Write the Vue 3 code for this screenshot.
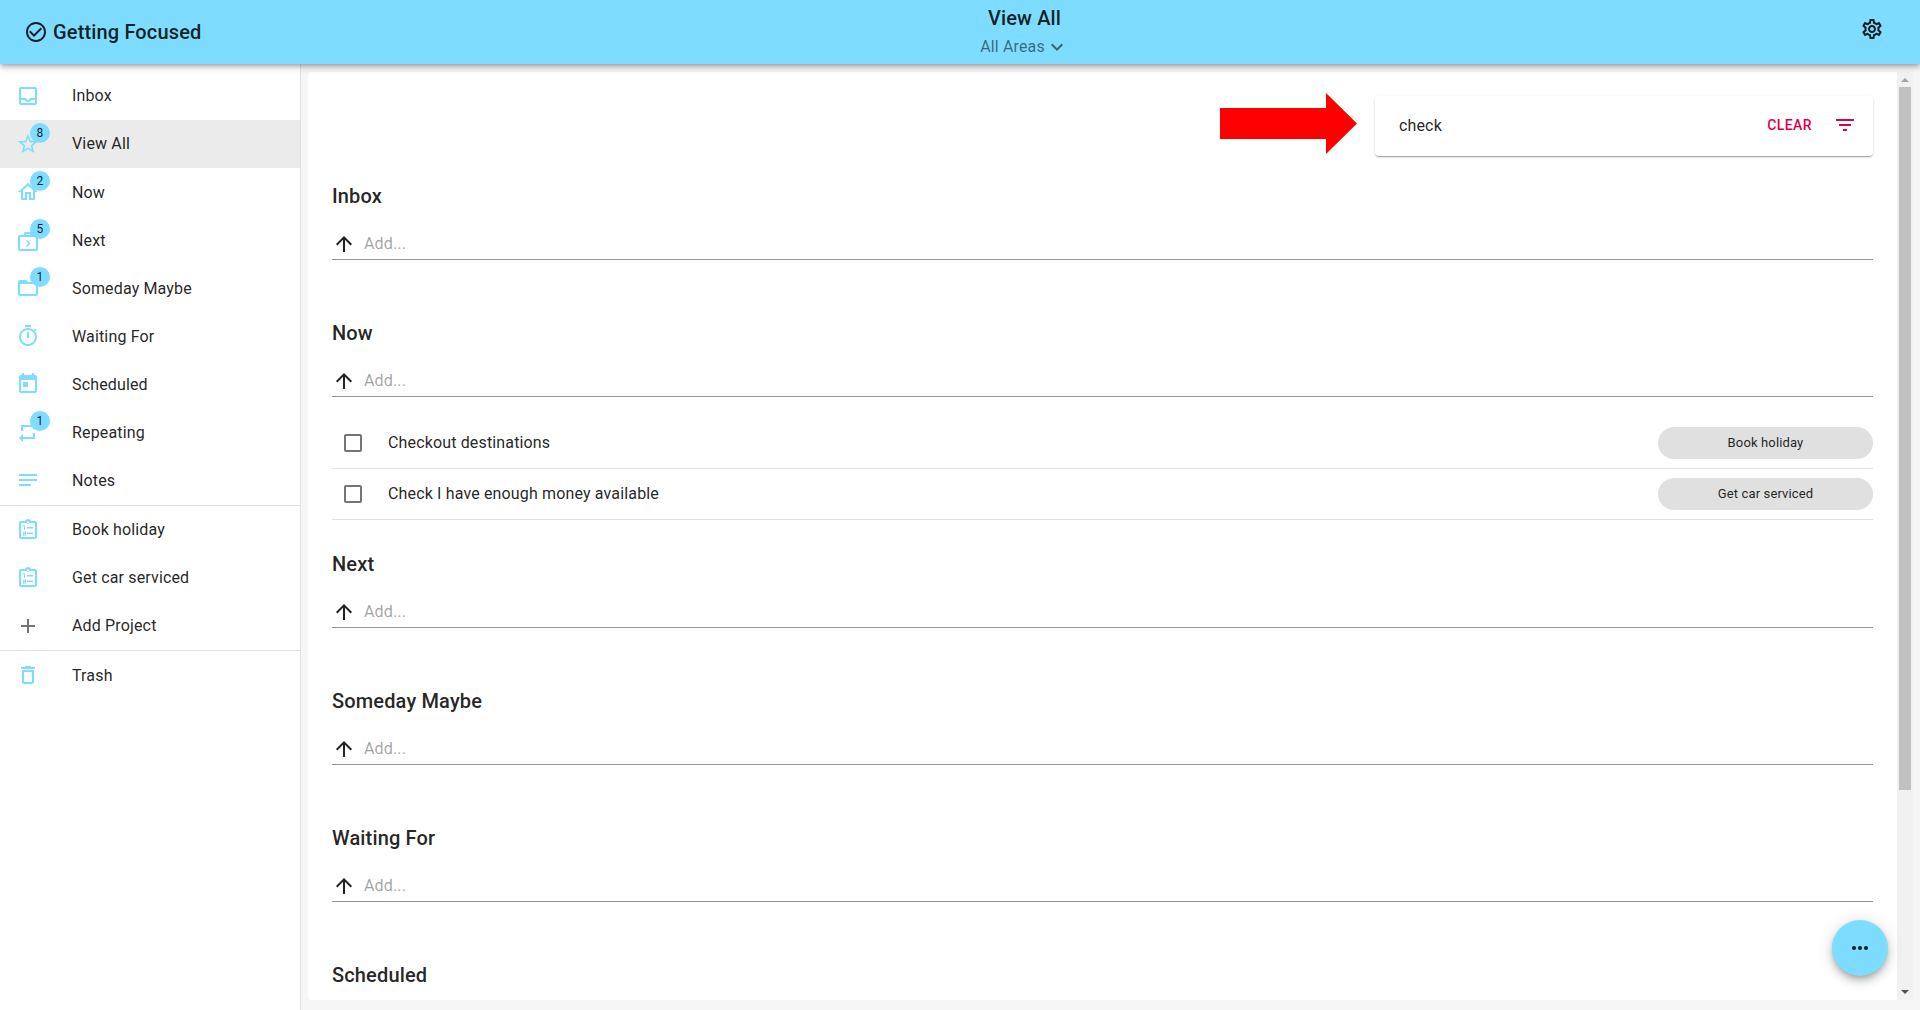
<script setup>
const icons = {
  inbox: 'M19 3H5c-1.1 0-2 .9-2 2v14c0 1.1.89 2 2 2h14c1.1 0 2-.9 2-2V5c0-1.1-.9-2-2-2zm0 16H5v-3h3.56c.69 1.19 1.97 2 3.45 2s2.75-.81 3.44-2H19v3zm0-5h-4.99c0 1.1-.9 2-2 2s-2-.9-2-2H5V5h14v9z',
  star: 'M22 9.24l-7.19-.62L12 2 9.19 8.63 2 9.24l5.46 4.73L5.82 21 12 17.27 18.18 21l-1.63-7.03L22 9.24zM12 15.4l-3.76 2.27 1-4.28-3.32-2.88 4.38-.38L12 6.1l1.71 4.04 4.38.38-3.32 2.88 1 4.28L12 15.4z',
  home: 'M12 5.69l5 4.5V18h-2v-6H9v6H7v-7.81l5-4.5M12 3L2 12h3v8h6v-6h2v6h6v-8h3L12 3z',
  next: 'M8 7V5.5C8 4.67 8.67 4 9.5 4h5c.83 0 1.5.67 1.5 1.5V7h4c1.1 0 2 .9 2 2v12c0 1.1-.9 2-2 2H4c-1.1 0-2-.9-2-2V9c0-1.1.9-2 2-2h4zm2 0h4V6h-4v1zM4 9v12h16V9H4zm6 4l1-1 3.5 3.5L11 19l-1-1 2.5-2.5z',
  folder: 'M20 6h-8l-2-2H4c-1.1 0-1.99.9-1.99 2L2 18c0 1.1.9 2 2 2h16c1.1 0 2-.9 2-2V8c0-1.1-.9-2-2-2zm0 12H4V8h16v10z',
  timer: 'M15 1H9v2h6V1zm-4 13h2V8h-2v6zm8.03-6.61l1.42-1.42c-.43-.51-.9-.99-1.41-1.41l-1.42 1.42C16.07 4.74 14.12 4 12 4c-4.97 0-9 4.03-9 9s4.02 9 9 9 9-4.03 9-9c0-2.12-.74-4.07-1.97-5.61zM12 20c-3.87 0-7-3.13-7-7s3.13-7 7-7 7 3.13 7 7-3.13 7-7 7z',
  today: 'M19 3h-1V1h-2v2H8V1H6v2H5c-1.11 0-1.99.9-1.99 2L3 19c0 1.1.89 2 2 2h14c1.1 0 2-.9 2-2V5c0-1.1-.9-2-2-2zm0 16H5V8h14v11zM7 10h5v5H7z',
  repeat: 'M7 7h10v3l4-4-4-4v3H5v6h2V7zm10 10H7v-3l-4 4 4 4v-3h12v-6h-2v4z',
  notes: 'M3 18h12v-2H3v2zM3 6v2h18V6H3zm0 7h18v-2H3v2z',
  project: 'M19 3h-4.18C14.4 1.84 13.3 1 12 1c-1.3 0-2.4.84-2.82 2H5c-1.1 0-2 .9-2 2v14c0 1.1.9 2 2 2h14c1.1 0 2-.9 2-2V5c0-1.1-.9-2-2-2zm0 16H5V5h14v14zM11 3.5h2v2h-2zM7 7.5h2V12H8V8.5H7zM7 13.5h3V16H8v.5h2v1H7V15h2v-.5H7zM11 9h6v1.5h-6zM11 14.5h6V16h-6z',
  plus: 'M19 13h-6v6h-2v-6H5v-2h6V5h2v6h6v2z',
  trash: 'M6 19c0 1.1.9 2 2 2h8c1.1 0 2-.9 2-2V7H6v12zM8 9h8v10H8V9zm7.5-5l-1-1h-5l-1 1H5v2h14V4z',
  check: 'M16.59 7.58L10 14.17l-3.59-3.58L5 12l5 5 8-8zM12 2C6.48 2 2 6.48 2 12s4.48 10 10 10 10-4.48 10-10S17.52 2 12 2zm0 18c-4.42 0-8-3.58-8-8s3.58-8 8-8 8 3.58 8 8-3.58 8-8 8z',
  gear: 'M19.43 12.98c.04-.32.07-.64.07-.98 0-.34-.03-.66-.07-.98l2.11-1.65c.19-.15.24-.42.12-.64l-2-3.46c-.09-.16-.26-.25-.44-.25-.06 0-.12.01-.17.03l-2.49 1c-.52-.4-1.08-.73-1.69-.98l-.38-2.65C14.46 2.18 14.25 2 14 2h-4c-.25 0-.46.18-.49.42l-.38 2.65c-.61.25-1.17.59-1.69.98l-2.49-1c-.06-.02-.12-.03-.18-.03-.17 0-.34.09-.43.25l-2 3.46c-.13.22-.07.49.12.64l2.11 1.65c-.04.32-.07.65-.07.98 0 .33.03.66.07.98l-2.11 1.65c-.19.15-.24.42-.12.64l2 3.46c.09.16.26.25.44.25.06 0 .12-.01.17-.03l2.49-1c.52.4 1.08.73 1.69.98l.38 2.65c.03.24.24.42.49.42h4c.25 0 .46-.18.49-.42l.38-2.65c.61-.25 1.17-.59 1.69-.98l2.49 1c.06.02.12.03.18.03.17 0 .34-.09.43-.25l2-3.46c.12-.22.07-.49-.12-.64l-2.11-1.65zm-1.98-1.71c.04.31.05.52.05.73 0 .21-.02.43-.05.73l-.14 1.13.89.7 1.08.84-.7 1.21-1.27-.51-1.04-.42-.9.68c-.43.32-.84.56-1.25.73l-1.06.43-.16 1.13-.2 1.35h-1.4l-.19-1.35-.16-1.13-1.06-.43c-.43-.18-.83-.41-1.23-.71l-.91-.7-1.06.43-1.27.51-.7-1.21 1.08-.84.89-.7-.14-1.13c-.03-.31-.05-.54-.05-.74s.02-.43.05-.73l.14-1.13-.89-.7-1.08-.84.7-1.21 1.27.51 1.04.42.9-.68c.43-.32.84-.56 1.25-.73l1.06-.43.16-1.13.2-1.35h1.39l.19 1.35.16 1.13 1.06.43c.43.18.83.41 1.23.71l.91.7 1.06-.43 1.27-.51.7 1.21-1.07.85-.89.7.14 1.13zM12 8c-2.21 0-4 1.79-4 4s1.79 4 4 4 4-1.79 4-4-1.79-4-4-4zm0 6c-1.1 0-2-.9-2-2s.9-2 2-2 2 .9 2 2-.9 2-2 2z',
  chevron: 'M16.59 8.59L12 13.17 7.41 8.59 6 10l6 6 6-6z',
  arrow: 'M4 12l1.41 1.41L11 7.83V20h2V7.83l5.58 5.59L20 12l-8-8-8 8z',
  box: 'M19 5v14H5V5h14m0-2H5c-1.1 0-2 .9-2 2v14c0 1.1.9 2 2 2h14c1.1 0 2-.9 2-2V5c0-1.1-.9-2-2-2z',
  filter: 'M10 18h4v-2h-4v2zM3 6v2h18V6H3zm3 7h12v-2H6v2z'
}

const navGroups = [
  [
    { label: 'Inbox', icon: 'inbox' },
    { label: 'View All', icon: 'star', badge: 8, active: true },
    { label: 'Now', icon: 'home', badge: 2 },
    { label: 'Next', icon: 'next', badge: 5 },
    { label: 'Someday Maybe', icon: 'folder', badge: 1 },
    { label: 'Waiting For', icon: 'timer' },
    { label: 'Scheduled', icon: 'today' },
    { label: 'Repeating', icon: 'repeat', badge: 1 },
    { label: 'Notes', icon: 'notes' }
  ],
  [
    { label: 'Book holiday', icon: 'project' },
    { label: 'Get car serviced', icon: 'project' },
    { label: 'Add Project', icon: 'plus', grey: true }
  ],
  [{ label: 'Trash', icon: 'trash' }]
]

// the last section runs off the bottom of the scroller, only its heading shows
const sections = [
  { title: 'Inbox', items: [], input: true },
  {
    title: 'Now',
    input: true,
    items: [
      { text: 'Checkout destinations', project: 'Book holiday' },
      { text: 'Check I have enough money available', project: 'Get car serviced' }
    ]
  },
  { title: 'Next', items: [], input: true },
  { title: 'Someday Maybe', items: [], input: true },
  { title: 'Waiting For', items: [], input: true },
  { title: 'Scheduled', items: [], input: false }
]
</script>

<template>
  <div class="app">
    <header class="topbar">
      <div class="brand">
        <svg class="icon" viewBox="0 0 24 24"><path :d="icons.check" /></svg>
        <span>Getting Focused</span>
      </div>
      <div class="view-title">
        <div class="view-name">View All</div>
        <div class="view-area">
          <span>All Areas</span>
          <svg class="icon" viewBox="0 0 24 24"><path :d="icons.chevron" /></svg>
        </div>
      </div>
      <button class="settings">
        <svg class="icon" viewBox="0 0 24 24"><path :d="icons.gear" /></svg>
      </button>
    </header>

    <div class="body">
      <nav class="drawer">
        <ul v-for="(group, i) in navGroups" :key="i" class="nav-group">
          <li
            v-for="item in group"
            :key="item.label"
            class="nav-item"
            :class="{ active: item.active }"
          >
            <span class="nav-icon" :class="{ grey: item.grey }">
              <svg class="icon" viewBox="0 0 24 24"><path :d="icons[item.icon]" fill-rule="evenodd" /></svg>
              <span v-if="item.badge" class="badge">{{ item.badge }}</span>
            </span>
            <span class="nav-label">{{ item.label }}</span>
          </li>
        </ul>
      </nav>

      <main class="main">
        <div class="card">
          <div class="scroller">
            <div class="filter-wrap">
              <div class="filter">
                <span class="filter-text">check</span>
                <span class="clear">Clear</span>
                <svg class="icon filter-icon" viewBox="0 0 24 24"><path :d="icons.filter" /></svg>
                <svg class="pointer" viewBox="0 0 137 61" width="137" height="61">
                  <path d="M0 15h106V0l31 30.5L106 61V46H0z" fill="#ff0000" />
                </svg>
              </div>
            </div>

            <section v-for="section in sections" :key="section.title" class="section">
              <h2>{{ section.title }}</h2>
              <div v-if="section.input" class="add-row">
                <svg class="icon" viewBox="0 0 24 24"><path :d="icons.arrow" /></svg>
                <span class="placeholder">Add...</span>
              </div>
              <ul class="task-list">
                <li v-for="task in section.items" :key="task.text" class="task">
                  <svg class="icon task-box" viewBox="0 0 24 24"><path :d="icons.box" /></svg>
                  <span class="task-text">{{ task.text }}</span>
                  <span class="chip">{{ task.project }}</span>
                </li>
              </ul>
            </section>
          </div>

          <div class="scrollbar">
            <span class="tri up"></span>
            <div class="track">
              <div class="thumb"></div>
            </div>
            <span class="tri down"></span>
          </div>
        </div>

        <button class="fab">
          <svg class="icon" viewBox="0 0 24 24">
            <circle cx="6" cy="12" r="2" /><circle cx="12" cy="12" r="2" /><circle cx="18" cy="12" r="2" />
          </svg>
        </button>
      </main>
    </div>
  </div>
</template>

<style>
html,
body {
  margin: 0;
  overflow: hidden;
}
</style>

<style scoped>
* {
  box-sizing: border-box;
}

.app {
  height: 1010px;
  display: flex;
  flex-direction: column;
  font-family: Roboto, "Liberation Sans", sans-serif;
  letter-spacing: 0.00938em;
  color: rgba(0, 0, 0, 0.87);
  background: #fff;
  overflow: hidden;
}

.icon {
  width: 24px;
  height: 24px;
  flex-shrink: 0;
  fill: currentColor;
  display: block;
}

.topbar {
  position: relative;
  z-index: 3;
  height: 64px;
  flex-shrink: 0;
  display: flex;
  align-items: center;
  justify-content: space-between;
  padding: 0 24px;
  background: #7ddcff;
  box-shadow: 0 2px 4px -1px rgba(0, 0, 0, 0.2), 0 4px 5px 0 rgba(0, 0, 0, 0.14), 0 1px 10px 0 rgba(0, 0, 0, 0.12);
}

.brand {
  display: flex;
  align-items: center;
  gap: 5px;
  width: 400px;
  font-size: 20px;
  font-weight: 500;
}

.view-title {
  position: absolute;
  left: 0;
  right: 0;
  top: 5px;
  text-align: center;
  padding-left: 129px;
}

.view-name {
  font-size: 20px;
  font-weight: 500;
  line-height: 26px;
}

.view-area {
  display: flex;
  align-items: center;
  justify-content: center;
  margin-top: 4px;
  font-size: 16px;
  line-height: 24px;
  color: rgba(0, 0, 0, 0.54);
}

.settings {
  position: relative;
  top: -3px;
  border: 0;
  background: none;
  padding: 0;
  margin-right: 12px;
  color: rgba(0, 0, 0, 0.87);
}

.body {
  flex: 1;
  display: flex;
  min-height: 0;
}

.drawer {
  width: 301px;
  flex-shrink: 0;
  padding-top: 7.9px;
  border-right: 1px solid #e0e0e0;
  background: #fff;
}

.nav-group {
  list-style: none;
  margin: 0 0 0.3px;
  padding: 0;
}

.nav-group + .nav-group {
  border-top: 1px solid #e0e0e0;
}

.nav-item {
  height: 48.05px;
  display: flex;
  align-items: center;
  padding: 0 16px;
  font-size: 16px;
}

.nav-item.active {
  background: #ebebeb;
}

.nav-icon {
  position: relative;
  width: 56px;
  color: #7ddcff;
}

.nav-icon.grey {
  color: #757575;
}

.badge {
  position: absolute;
  left: 14px;
  top: -9px;
  width: 20px;
  height: 20px;
  border-radius: 50%;
  background: #7ddcff;
  color: rgba(0, 0, 0, 0.87);
  font-size: 12px;
  line-height: 20px;
  text-align: center;
}

.main {
  position: relative;
  flex: 1;
  min-width: 0;
  padding: 8px 7px 10px;
  background: #f6f6f6;
}

.card {
  height: 100%;
  display: flex;
  background: #fff;
  border-radius: 4px;
  overflow: hidden;
}

.scroller {
  flex: 1;
  min-width: 0;
  padding: 24px 24px 0;
  overflow: hidden;
}

.filter-wrap {
  display: flex;
  justify-content: flex-end;
  margin-bottom: 24px;
}

.filter {
  position: relative;
  width: 498px;
  height: 60px;
  display: flex;
  align-items: center;
  padding: 0 16px 2px 24px;
  border-radius: 4px;
  background: #fff;
  box-shadow: 0 2px 1px -1px rgba(0, 0, 0, 0.2), 0 1px 1px 0 rgba(0, 0, 0, 0.14), 0 1px 3px 0 rgba(0, 0, 0, 0.12);
  font-size: 16px;
}

.filter-text {
  flex: 1;
}

.clear {
  margin-right: 21px;
  color: #dc004e;
  font-size: 14px;
  font-weight: 500;
  letter-spacing: 0.02857em;
  text-transform: uppercase;
}

.filter-icon {
  color: #dc004e;
}

.pointer {
  position: absolute;
  right: 516px;
  top: -3px;
}

.section {
  padding-bottom: 28px;
}

h2 {
  margin: 0 0 15px;
  font-size: 20px;
  font-weight: 500;
  line-height: 32px;
  letter-spacing: 0.0075em;
}

.add-row {
  height: 33px;
  display: flex;
  align-items: center;
  gap: 8px;
  border-bottom: 1px solid rgba(0, 0, 0, 0.42);
}

.add-row .icon {
  margin-top: 2px;
}

.placeholder {
  font-size: 16px;
  color: rgba(0, 0, 0, 0.38);
}

.task-list {
  list-style: none;
  margin: 21px 0 0;
  padding: 0;
  min-height: 8px;
}

.task {
  height: 51px;
  display: flex;
  align-items: center;
  padding-left: 9px;
  border-bottom: 1px solid #e0e0e0;
  font-size: 16px;
}

.task-box {
  color: #757575;
}

.task-text {
  flex: 1;
  margin-left: 23px;
  margin-bottom: 2px;
}

.chip {
  width: 215px;
  height: 32px;
  border-radius: 16px;
  background: #e0e0e0;
  font-size: 13px;
  line-height: 32px;
  letter-spacing: 0.01071em;
  text-align: center;
}

.scrollbar {
  width: 16px;
  flex-shrink: 0;
  display: flex;
  flex-direction: column;
  align-items: center;
  background: #f1f1f1;
}

.tri {
  width: 0;
  height: 0;
  flex-shrink: 0;
  border-left: 4px solid transparent;
  border-right: 4px solid transparent;
}

.tri.up {
  border-bottom: 4px solid #a3a3a3;
  margin: 6px 0 5px;
}

.tri.down {
  border-top: 4px solid #505050;
  margin: 5px 0 6px;
}

.track {
  flex: 1;
  width: 100%;
  padding: 0 2px;
}

.thumb {
  height: 703px;
  background: #c1c1c1;
}

.fab {
  position: absolute;
  left: 1531px;
  top: 856px;
  width: 56px;
  height: 56px;
  border: 0;
  border-radius: 50%;
  padding: 16px;
  background: #7ddcff;
  color: rgba(0, 0, 0, 0.87);
  box-shadow: 0 3px 5px -1px rgba(0, 0, 0, 0.2), 0 6px 10px 0 rgba(0, 0, 0, 0.14), 0 1px 18px 0 rgba(0, 0, 0, 0.12);
}
</style>
